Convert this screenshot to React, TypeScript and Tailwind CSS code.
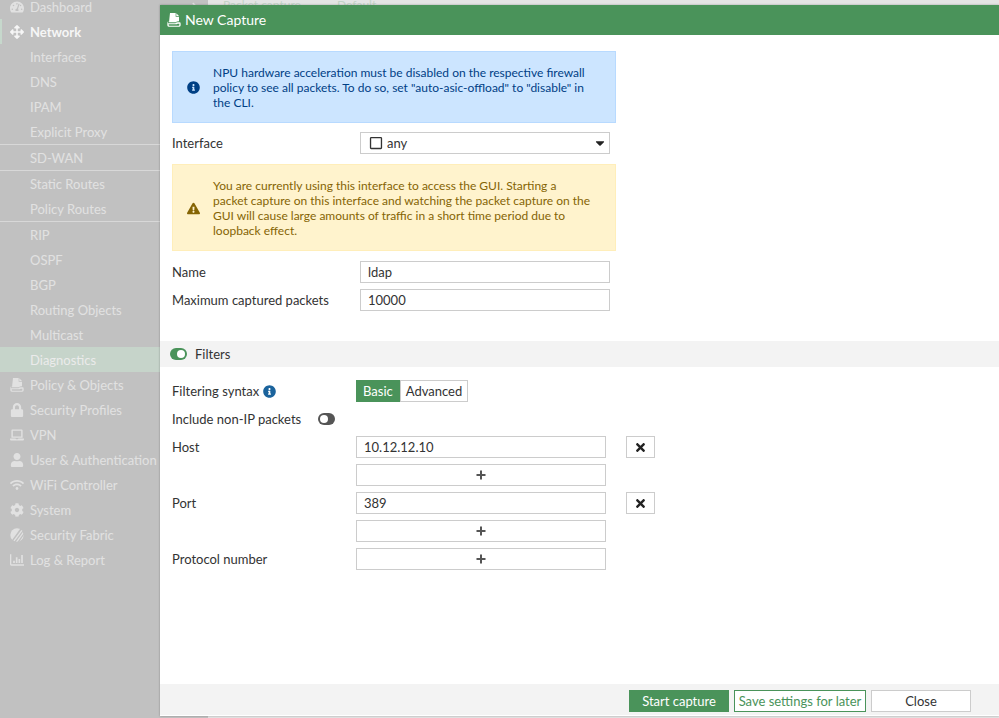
import React, { useState } from 'react';
import clsx from 'clsx';
import {
  FaArrowsAlt,
  FaCaretDown,
  FaChevronRight,
  FaCog,
  FaExclamationTriangle,
  FaInfoCircle,
  FaLaptop,
  FaLock,
  FaRegSquare,
  FaTachometerAlt,
  FaTimes,
  FaUser,
  FaWifi,
} from 'react-icons/fa';

const PolicyIcon = ({ className }: { className?: string }) => (
  <svg viewBox="0 0 42 42" className={className} fill="currentColor" aria-hidden="true">
    <path d="M9 0h17v11h10v14q-7 0-10 3H6z" />
    <path d="M28 1l8 8h-8z" />
    <path
      fillRule="evenodd"
      d="M4 24l-1 7h22q3-3 7-3h6q3 0 3 4v5q0 4-4 4H5q-4 0-4-4v-5q0-6 3-8zM5 34v2q0 2 2 2h28q2 0 2-2v-4h-5q-3 2-6 2z"
    />
  </svg>
);

const FabricIcon = ({ className }: { className?: string }) => (
  <svg viewBox="0 0 42 42" className={className} aria-hidden="true">
    <defs>
      <clipPath id="fabric-disc">
        <circle cx="21" cy="21" r="20" />
      </clipPath>
    </defs>
    <g clipPath="url(#fabric-disc)">
      <path d="M0 0h32L2 42H0z" fill="currentColor" />
      <path d="M38 4L8 44M44 8L17 46M46 18L27 46" stroke="currentColor" strokeWidth="4" />
    </g>
  </svg>
);

const ReportIcon = ({ className }: { className?: string }) => (
  <svg viewBox="0 0 42 42" className={className} fill="none" stroke="currentColor" aria-hidden="true">
    <path d="M2 4v30q0 2 2 2h38" strokeWidth="4" />
    <path d="M12 23v7M20 13v17M28 18v12M36 6v24" strokeWidth="5" />
  </svg>
);

type NavItem = {
  label: string;
  icon?: React.ComponentType<{ className?: string }>;
  open?: boolean;
  active?: boolean;
  divider?: boolean;
};

const navItems: NavItem[] = [
  { label: 'Dashboard', icon: FaTachometerAlt },
  { label: 'Network', icon: FaArrowsAlt, open: true },
  { label: 'Interfaces' },
  { label: 'DNS' },
  { label: 'IPAM' },
  { label: 'Explicit Proxy' },
  { label: 'SD-WAN', divider: true },
  { label: 'Static Routes', divider: true },
  { label: 'Policy Routes' },
  { label: 'RIP', divider: true },
  { label: 'OSPF' },
  { label: 'BGP' },
  { label: 'Routing Objects' },
  { label: 'Multicast' },
  { label: 'Diagnostics', active: true },
  { label: 'Policy & Objects', icon: PolicyIcon },
  { label: 'Security Profiles', icon: FaLock },
  { label: 'VPN', icon: FaLaptop },
  { label: 'User & Authentication', icon: FaUser },
  { label: 'WiFi Controller', icon: FaWifi },
  { label: 'System', icon: FaCog },
  { label: 'Security Fabric', icon: FabricIcon },
  { label: 'Log & Report', icon: ReportIcon },
];

const Sidebar = () => (
  <nav className="w-52 shrink-0 bg-[#c1c1c1] text-[#e1e1e1] overflow-hidden">
    <ul className="-mt-1.5">
      {navItems.map(({ label, icon: Icon, open, active, divider }) => (
        <li key={label} className={clsx(divider && 'border-t border-[#d8d8d8]')}>
          <a
            href="#"
            className={clsx(
              'flex items-center h-[25px] pl-2 border-l-2 leading-4',
              open ? 'border-[#c6d8cc] font-bold text-[#f6f6f6]' : 'border-transparent',
              active && 'bg-[#c6d4ca] text-[#ebebeb]'
            )}
          >
            <span className="w-5 shrink-0">{Icon && <Icon className="w-3.5 h-3.5" />}</span>
            <span className="grow">{label}</span>
            {label === 'Dashboard' && <FaChevronRight className="w-2.5 h-2.5 mr-2" />}
          </a>
        </li>
      ))}
    </ul>
  </nav>
);

const Toggle = ({ id, checked, onChange }: { id: string; checked: boolean; onChange: () => void }) => (
  <span className="relative inline-flex w-[17px] h-3 shrink-0">
    <input
      id={id}
      type="checkbox"
      role="switch"
      checked={checked}
      onChange={onChange}
      className={clsx('appearance-none w-full h-full rounded-full cursor-pointer', checked ? 'bg-[#4a935a]' : 'bg-[#555]')}
    />
    <span
      className={clsx(
        'absolute top-0.5 w-2 h-2 rounded-full bg-white pointer-events-none',
        checked ? 'right-0.5' : 'left-0.5'
      )}
    />
  </span>
);

const inputClass = 'w-[250px] h-[22px] px-[7px] bg-white border border-[#ccc] text-[#333] focus:outline-none';

const RemoveButton = ({ label, onClick }: { label: string; onClick: () => void }) => (
  <button
    type="button"
    aria-label={label}
    onClick={onClick}
    className="ml-5 w-[29px] h-[22px] flex items-center justify-center bg-white border border-[#ccc] text-[#222]"
  >
    <FaTimes className="w-[13px] h-[13px]" />
  </button>
);

const AddButton = ({ label }: { label: string }) => (
  <button
    type="button"
    aria-label={label}
    className="w-[250px] h-[22px] flex items-center justify-center bg-white border border-[#ccc] text-[#555]"
  >
    <svg viewBox="0 0 10 10" className="w-2.5 h-2.5" fill="currentColor" aria-hidden="true">
      <path d="M4 .5h2V4h3.500v2H6v3.500H4V6H.5V4H4z" />
    </svg>
  </button>
);

const App: React.FC = () => {
  const [name, setName] = useState('ldap');
  const [maxPackets, setMaxPackets] = useState('10000');
  const [filters, setFilters] = useState(true);
  const [syntax, setSyntax] = useState<'Basic' | 'Advanced'>('Basic');
  const [nonIp, setNonIp] = useState(false);
  const [host, setHost] = useState('10.12.12.10');
  const [port, setPort] = useState('389');

  return (
    <div className="relative flex h-screen overflow-hidden bg-[#e4e4e4] font-['Lato',sans-serif] text-[13px] leading-[15px] text-[#333]">
      <Sidebar />
      <div className="flex gap-9 pl-[15px] text-xs leading-[10px] text-[#c3d3c7]">
        <span>Packet capture</span>
        <span>Default</span>
      </div>

      <div
        role="dialog"
        aria-labelledby="dialog-title"
        className="absolute left-40 right-0 top-[5px] bottom-0.5 flex flex-col bg-white shadow-[0_0_2px_rgba(0,0,0,0.3)]"
      >
        <header className="flex items-center gap-1 h-[30px] shrink-0 px-[7px] bg-[#4a935a] text-white">
          <PolicyIcon className="w-3.5 h-3.5" />
          <h1 id="dialog-title" className="text-sm">New Capture</h1>
        </header>

        <main className="grow overflow-hidden pt-4">
          <section className="px-3">
            <div className="flex items-center w-[444px] pt-[13px] pb-3 pl-3.5 bg-[#cce5ff] border border-[#b8daff] text-[#004085]">
              <FaInfoCircle className="w-[13px] h-[13px] mr-[13px] shrink-0" />
              <p className="text-xs leading-[15px]">
                NPU hardware acceleration must be disabled on the respective firewall
                <br />
                policy to see all packets. To do so, set "auto-asic-offload" to "disable" in
                <br />
                the CLI.
              </p>
            </div>

            <div className="flex items-center mt-[9px] mb-2.5">
              <label htmlFor="interface" className="w-[188px]">Interface</label>
              <div className="relative">
                <select id="interface" className={clsx(inputClass, 'appearance-none pl-[26px] leading-5')}>
                  <option>any</option>
                </select>
                <FaRegSquare className="absolute left-[9px] top-1 w-3.5 h-3.5 pointer-events-none" />
                <FaCaretDown className="absolute right-1 top-1 w-3 h-3.5 text-[#222] pointer-events-none" />
              </div>
            </div>

            <div className="flex items-center w-[444px] pt-[13px] pb-3 pl-3.5 bg-[#fff3cd] border border-[#ffeeba] text-[#856404]">
              <FaExclamationTriangle className="w-[13px] h-[13px] mr-[13px] shrink-0" />
              <p className="text-xs leading-[15px]">
                You are currently using this interface to access the GUI. Starting a
                <br />
                packet capture on this interface and watching the packet capture on the
                <br />
                GUI will cause large amounts of traffic in a short time period due to
                <br />
                loopback effect.
              </p>
            </div>

            <div className="flex flex-col gap-1.5 mt-2.5">
              <div className="flex items-center">
                <label htmlFor="name" className="w-[188px]">Name</label>
                <input id="name" className={inputClass} value={name} onChange={(e) => setName(e.target.value)} />
              </div>
              <div className="flex items-center">
                <label htmlFor="max-packets" className="w-[188px]">Maximum captured packets</label>
                <input
                  id="max-packets"
                  className={inputClass}
                  value={maxPackets}
                  onChange={(e) => setMaxPackets(e.target.value)}
                />
              </div>
            </div>
          </section>

          <div className="flex items-center gap-2 h-[26px] mt-[30px] px-2.5 bg-[#f3f3f3]">
            <Toggle id="filters" checked={filters} onChange={() => setFilters(!filters)} />
            <label htmlFor="filters">Filters</label>
          </div>

          {filters && (
            <section className="flex flex-col gap-1.5 px-3 pt-[13px]">
              <div className="flex items-center">
                <span id="syntax-label" className="flex items-center gap-1 w-[184px]">
                  Filtering syntax
                  <FaInfoCircle className="w-[13px] h-[13px] text-[#1b639c]" />
                </span>
                <div role="group" aria-labelledby="syntax-label" className="flex">
                  {(['Basic', 'Advanced'] as const).map((option) => (
                    <button
                      key={option}
                      type="button"
                      aria-pressed={syntax === option}
                      onClick={() => setSyntax(option)}
                      className={clsx(
                        'h-[22px] border',
                        syntax === option ? 'px-1.5 bg-[#4a935a] border-[#4a935a] text-white' : 'px-[5px] bg-white border-[#ccc]'
                      )}
                    >
                      {option}
                    </button>
                  ))}
                </div>
              </div>

              <div className="flex items-center h-[22px]">
                <label htmlFor="non-ip" className="w-[146px]">Include non-IP packets</label>
                <Toggle id="non-ip" checked={nonIp} onChange={() => setNonIp(!nonIp)} />
              </div>

              <div className="flex">
                <label htmlFor="host" className="w-[184px] pt-1">Host</label>
                <div className="flex flex-col gap-1.5">
                  <div className="flex">
                    <input id="host" className={inputClass} value={host} onChange={(e) => setHost(e.target.value)} />
                    <RemoveButton label="Remove host" onClick={() => setHost('')} />
                  </div>
                  <AddButton label="Add host" />
                </div>
              </div>

              <div className="flex">
                <label htmlFor="port" className="w-[184px] pt-1">Port</label>
                <div className="flex flex-col gap-1.5">
                  <div className="flex">
                    <input id="port" className={inputClass} value={port} onChange={(e) => setPort(e.target.value)} />
                    <RemoveButton label="Remove port" onClick={() => setPort('')} />
                  </div>
                  <AddButton label="Add port" />
                </div>
              </div>

              <div className="flex">
                <span className="w-[184px] pt-1">Protocol number</span>
                <AddButton label="Add protocol number" />
              </div>
            </section>
          )}
        </main>

        <footer className="flex justify-end gap-[5px] shrink-0 pt-1.5 pb-[3px] pr-7 bg-[#f3f3f3] border-b border-white">
          <button type="button" className="w-[100px] h-[22px] bg-[#4a935a] text-white">Start capture</button>
          <button type="button" className="w-[132px] h-[22px] bg-white border border-[#4a935a] text-[#4a935a]">
            Save settings for later
          </button>
          <button type="button" className="w-[100px] h-[22px] bg-white border border-[#ccc]">Close</button>
        </footer>
      </div>
    </div>
  );
};

export default App;
